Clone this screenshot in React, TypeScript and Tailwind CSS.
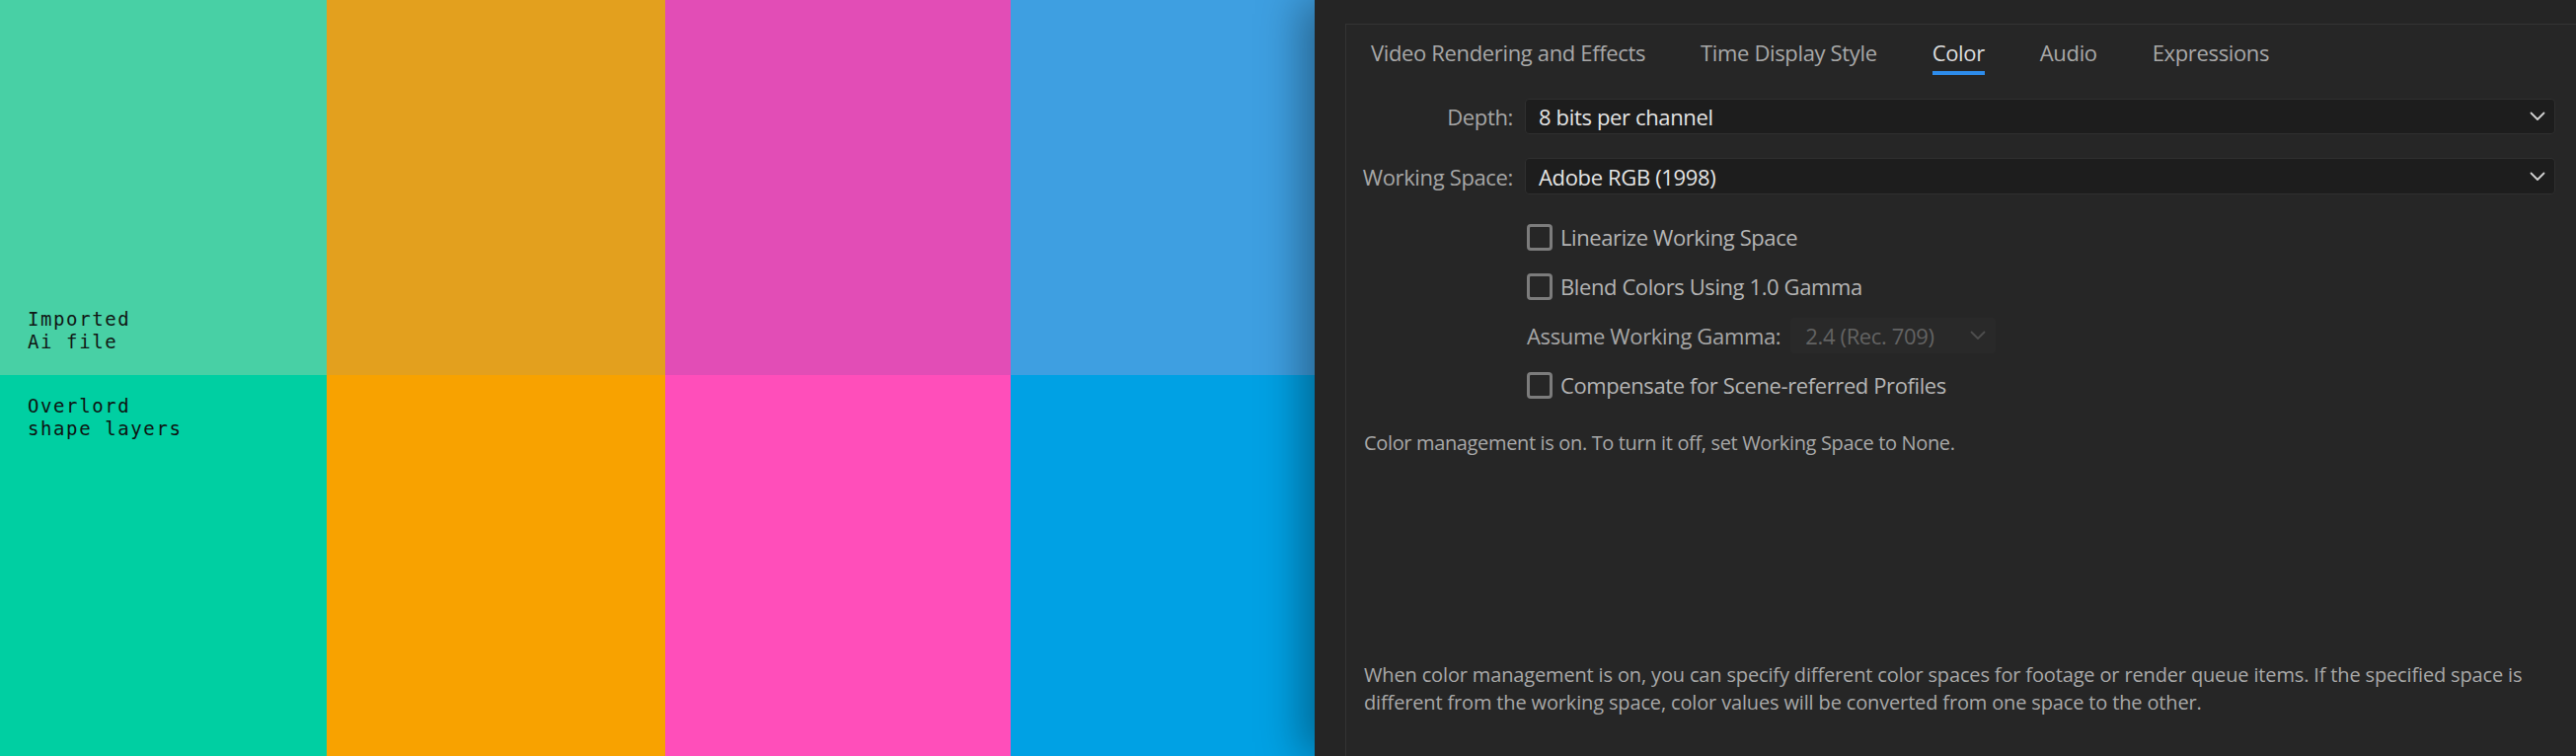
import React from "react";

function Chevron({ color = "#d2d2d2" }: { color?: string }) {
  return (
    <svg width="16" height="10" viewBox="0 0 16 10" fill="none">
      <path d="M1.5 1.5 L8 8 L14.5 1.5" stroke={color} strokeWidth="1.8" strokeLinecap="round" strokeLinejoin="round" />
    </svg>
  );
}

function Checkbox({ label }: { label: string }) {
  return (
    <div className="flex h-[50px] items-center">
      <div className="h-[27px] w-[26px] rounded-[4px] border-[3px] border-[#7c7c7c]" />
      <span className="ml-[8px] text-[22px] leading-[30px] tracking-[-0.4px] text-[#b4b4b4] whitespace-nowrap">
        {label}
      </span>
    </div>
  );
}

export default function App() {
  const tabs = ["Video Rendering and Effects", "Time Display Style", "Color", "Audio", "Expressions"];
  return (
    <div className="flex h-[766px] w-[2610px] overflow-hidden">
      <div className="grid w-[1332px] shrink-0 grid-cols-[331px_343px_350px_308px] grid-rows-[380px_386px]">
        <div className="flex flex-col justify-end bg-[#48d0a5] pb-[22px] pl-[28px] font-['DejaVu_Sans_Mono',monospace] text-[19px] leading-[23px] tracking-[1.6px] text-[#101815]">
          <span>Imported</span>
          <span>Ai file</span>
        </div>
        <div className="bg-[#e3a01e]" />
        <div className="bg-[#e24db6]" />
        <div className="bg-[#3e9fe1]" />
        <div className="flex flex-col bg-[#00cfa2] pt-[20px] pl-[28px] font-['DejaVu_Sans_Mono',monospace] text-[19px] leading-[23px] tracking-[1.6px] text-[#0d1512]">
          <span>Overlord</span>
          <span>shape layers</span>
        </div>
        <div className="bg-[#f8a200]" />
        <div className="bg-[#ff4eba]" />
        <div className="bg-[#00a1e4]" />
      </div>
      <div className="relative z-10 min-w-0 flex-1 bg-[#252525] pl-[31px] pt-[24px] shadow-[-14px_0_40px_rgba(0,0,0,0.35)] font-['Open_Sans',sans-serif] [font-stretch:90%]">
        <div className="h-full min-w-0 border-l border-t border-[#343434] bg-[#262626]">
          <div className="flex gap-[56px] pl-[25px] pt-[13px]">
            {tabs.map((t) => (
              <div key={t} className="flex flex-col items-stretch">
                <span className={"text-[22px] leading-[30px] tracking-[-0.35px] whitespace-nowrap " + (t === "Color" ? "text-[#dddddd]" : "text-[#a8a8a8]")}>{t}</span>
                <div className={"mt-[4px] h-[4px] " + (t === "Color" ? "bg-[#2d8ceb]" : "bg-transparent")} />
              </div>
            ))}
          </div>
          <div className="mt-[24px] grid grid-cols-[169px_minmax(0,1fr)] items-center gap-x-[12px] gap-y-[24px] pr-[21px]">
            <span className="text-right text-[22px] leading-[30px] tracking-[-0.35px] text-[#a6a6a6] whitespace-nowrap">Depth:</span>
            <div className="flex h-[36px] items-center justify-between rounded-[4px] border border-[#2f2f2f] bg-[#1d1d1d] pl-[13px] pr-[9px]">
              <span className="text-[22px] leading-[30px] tracking-[-0.35px] text-[#e4e4e4]">8 bits per channel</span>
              <Chevron />
            </div>
            <span className="text-right text-[22px] leading-[30px] tracking-[-0.35px] text-[#a6a6a6] whitespace-nowrap">Working Space:</span>
            <div className="flex h-[37px] items-center justify-between rounded-[4px] border border-[#2f2f2f] bg-[#1d1d1d] pl-[13px] pr-[9px]">
              <span className="text-[22px] leading-[30px] tracking-[-0.35px] text-[#e4e4e4]">Adobe RGB (1998)</span>
              <Chevron />
            </div>
          </div>
          <div className="mt-[18px] flex flex-col pl-[183px]">
            <Checkbox label="Linearize Working Space" />
            <Checkbox label="Blend Colors Using 1.0 Gamma" />
            <div className="flex h-[50px] items-center">
              <span className="text-[22px] leading-[30px] tracking-[-0.35px] text-[#a6a6a6] whitespace-nowrap">Assume Working Gamma:</span>
              <div className="ml-[10px] flex h-[36px] w-[208px] items-center justify-between rounded-[3px] bg-[#292929] pl-[15px] pr-[10px]">
                <span className="text-[22px] leading-[30px] tracking-[-0.35px] text-[#636363] whitespace-nowrap">2.4 (Rec. 709)</span>
                <Chevron color="#4e4e4e" />
              </div>
            </div>
            <Checkbox label="Compensate for Scene-referred Profiles" />
          </div>
          <p className="mt-[20px] pl-[18px] text-[20px] leading-[28px] tracking-[-0.35px] text-[#a8a8a8]">
            Color management is on. To turn it off, set Working Space to None.
          </p>
          <p className="mt-[207px] pl-[18px] text-[20px] leading-[28px] tracking-[-0.15px] text-[#a8a8a8] whitespace-nowrap">
            When color management is on, you can specify different color spaces for footage or render queue items. If the specified space is
            <br />
            different from the working space, color values will be converted from one space to the other.
          </p>
        </div>
      </div>
    </div>
  );
}
